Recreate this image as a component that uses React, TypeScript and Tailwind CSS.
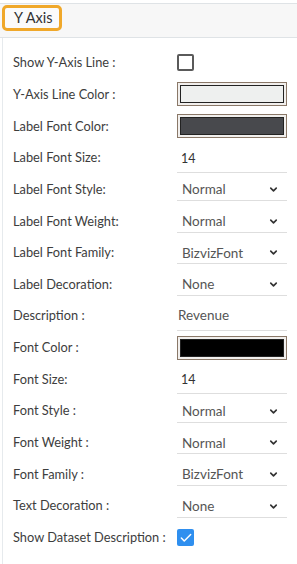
import { Check, ChevronDown } from "lucide-react";

type Row =
  | { label: string; kind: "checkbox"; checked: boolean }
  | { label: string; kind: "color"; color: string }
  | { label: string; kind: "text"; value: string; dim?: boolean }
  | { label: string; kind: "select"; value: string };

const rows: Row[] = [
  { label: "Show Y-Axis Line :", kind: "checkbox", checked: false },
  { label: "Y-Axis Line Color :", kind: "color", color: "#eef0ef" },
  { label: "Label Font Color:", kind: "color", color: "#48494d" },
  { label: "Label Font Size:", kind: "text", value: "14" },
  { label: "Label Font Style:", kind: "select", value: "Normal" },
  { label: "Label Font Weight:", kind: "select", value: "Normal" },
  { label: "Label Font Family:", kind: "select", value: "BizvizFont" },
  { label: "Label Decoration:", kind: "select", value: "None" },
  { label: "Description :", kind: "text", value: "Revenue", dim: true },
  { label: "Font Color :", kind: "color", color: "#000000" },
  { label: "Font Size:", kind: "text", value: "14" },
  { label: "Font Style :", kind: "select", value: "Normal" },
  { label: "Font Weight :", kind: "select", value: "Normal" },
  { label: "Font Family :", kind: "select", value: "BizvizFont" },
  { label: "Text Decoration :", kind: "select", value: "None" },
  { label: "Show Dataset Description :", kind: "checkbox", checked: true },
];

function Control({ row }: { row: Row }) {
  if (row.kind === "checkbox") {
    return row.checked ? (
      <div className="flex h-[17px] w-[17px] items-center justify-center rounded-[2px] bg-[#2f8fef]">
        <Check size={14} strokeWidth={2.5} className="text-white" />
      </div>
    ) : (
      <div className="h-[17px] w-[17px] rounded-[2px] border-2 border-[#5a5a5a] bg-white" />
    );
  }
  if (row.kind === "color") {
    return (
      <div className="h-[24px] w-[110px] border border-[#8a7868] bg-[#f1efed] p-[2px]">
        <div
          className="h-full w-full border border-[#222]"
          style={{ backgroundColor: row.color }}
        />
      </div>
    );
  }
  if (row.kind === "text") {
    return (
      <div
        className={
          row.dim
            ? "mt-[4px] flex h-[26px] w-[110px] items-start border-b border-[#dedede] pt-0"
            : "mt-[4px] flex h-[26px] w-[110px] items-start border-b border-[#dedede] pt-[3px]"
        }
      >
        <span
          className={
            row.dim
              ? "pl-[1px] text-[13.5px] text-[#555]"
              : "pl-[4px] text-[12.5px] text-[#333]"
          }
        >
          {row.value}
        </span>
      </div>
    );
  }
  return (
    <div className="mt-[1px] flex h-[22px] w-[110px] items-center justify-between border-b border-[#dedede] pl-[5px] pr-[8px]">
      <span className="text-[13.5px] text-[#555]">{row.value}</span>
      <ChevronDown size={11} strokeWidth={3.5} className="text-[#333]" />
    </div>
  );
}

export default function App() {
  return (
    <div
      className="h-[564px] w-[297px] overflow-hidden bg-white"
      style={{ fontFamily: "Lato, 'Open Sans', sans-serif" }}
    >
      <div className="h-[3px] bg-white" />
      <div className="flex h-[35px] items-start border-y border-[#dfe3e6] bg-[#f7f7f7]">
        <div className="ml-[2px] mt-[1px] flex h-[26px] items-center rounded-[5px] border-[3px] border-[#f0a82a] bg-[#fbfbfb] pl-[9px] pr-[6px]">
          <span className="text-[14.5px] text-[#333]">Y Axis</span>
        </div>
      </div>
      <div className="ml-[2px] h-full border-l border-[#e6eaed] pt-[9px]">
        {rows.map((row) => (
          <div key={row.label} className="flex h-[31.67px] items-center pl-[10px]">
            <div className="w-[164px] text-[12.8px] text-[#3d3d3d]">{row.label}</div>
            <Control row={row} />
          </div>
        ))}
      </div>
    </div>
  );
}
